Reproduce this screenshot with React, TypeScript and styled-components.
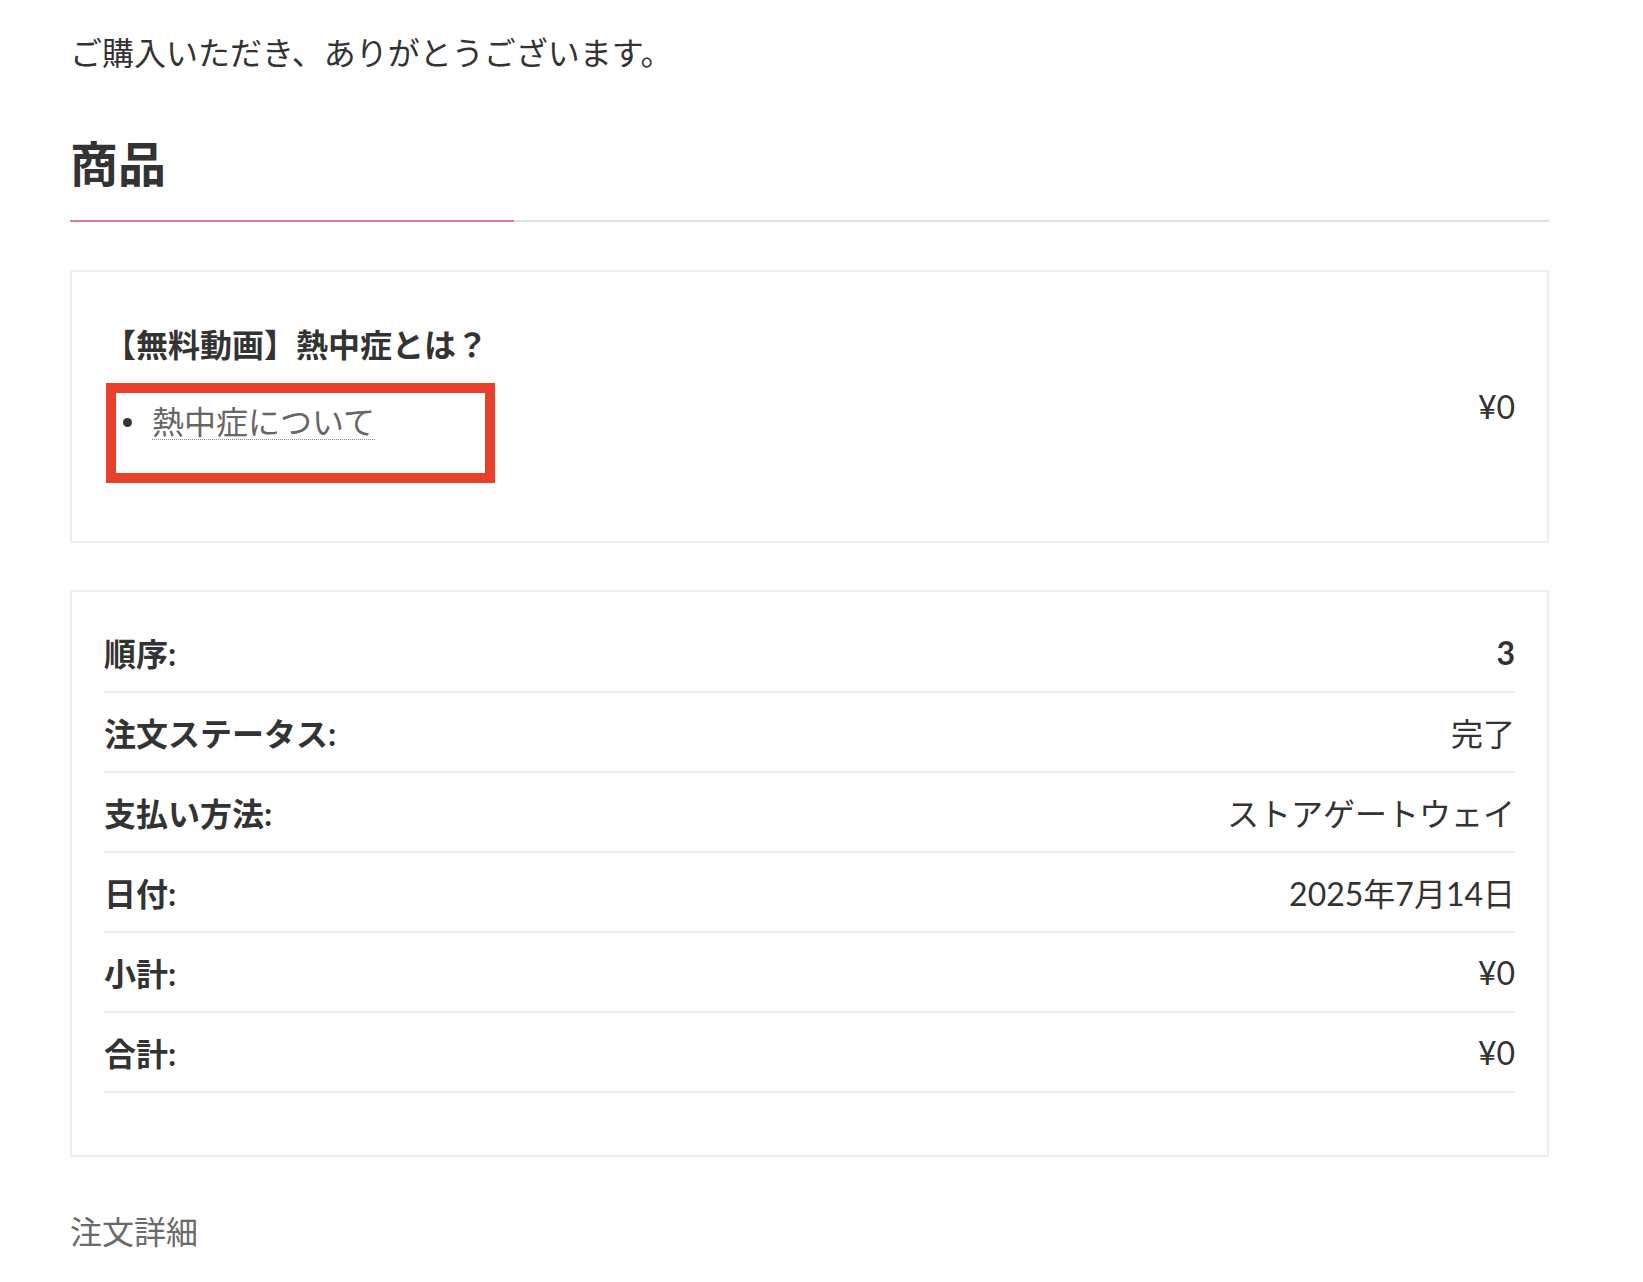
import * as React from 'react'
import styled, { createGlobalStyle } from 'styled-components'

const GlobalStyle = createGlobalStyle`
  html, body {
    margin: 0;
    padding: 0;
    background: #ffffff;
  }
  body {
    font-family: Lato, "Noto Sans CJK JP", sans-serif;
    color: #333333;
  }
`

const Page = styled.div`
  width: 1479px;
  padding: 30px 0 40px 70px;
`
const Intro = styled.p`
  margin: 0;
  font-size: 32px;
  line-height: 46px;
  color: #333;
`
const Heading = styled.h2`
  margin: 58px 0 0;
  font-size: 48px;
  line-height: 60px;
  font-weight: 700;
  color: #333;
`
const Underline = styled.div`
  display: flex;
  margin-top: 26px;
  height: 2px;
`
const UnderlineSegment = styled.div<{ $accent?: boolean }>`
  height: 2px;
  background: ${({ $accent }) => ($accent ? '#e0789b' : '#e2e2e2')};
  ${({ $accent }) => ($accent ? 'width: 30%;' : 'flex: 1;')}
`
const Card = styled.div`
  border: 2px solid #eeeeee;
`
const ProductCard = styled(Card)`
  margin-top: 48px;
  padding: 50px 32px;
  display: flex;
  align-items: center;
  justify-content: space-between;
`
const ProductInfo = styled.div`
  display: flex;
  flex-direction: column;
`
const ProductTitle = styled.div`
  font-size: 32px;
  line-height: 46px;
  font-weight: 700;
  color: #333;
`
const ItemList = styled.ul`
  position: relative;
  list-style: none;
  margin: 37px 0 51px;
  padding: 0;
`
const Item = styled.li`
  display: flex;
  align-items: center;
  gap: 20px;
  padding-left: 19px;
  font-size: 32px;
  line-height: 46px;
`
const Bullet = styled.span`
  width: 9px;
  height: 9px;
  border-radius: 50%;
  background: #333;
`
const ItemLink = styled.a`
  color: #666;
  text-decoration: none;
  border-bottom: 1.5px dotted #888;
  line-height: 34px;
`
const Highlight = styled.div`
  position: absolute;
  left: 2px;
  top: -22px;
  width: 369px;
  height: 80px;
  border: 10px solid #e8402a;
  pointer-events: none;
`
const Price = styled.div`
  font-size: 32px;
  line-height: 46px;
  color: #333;
`
const SummaryCard = styled(Card)`
  margin-top: 47px;
  padding: 21px 32px 62px;
`
const SummaryRow = styled.div`
  display: flex;
  align-items: center;
  justify-content: space-between;
  height: 78px;
  border-bottom: 2px solid #eeeeee;
  font-size: 32px;
`
const Label = styled.span`
  font-weight: 700;
  color: #333;
`
const Value = styled.span<{ $bold?: boolean }>`
  font-weight: ${({ $bold }) => ($bold ? 700 : 400)};
  color: #333;
`
const DetailsTitle = styled.div`
  margin-top: 52px;
  font-size: 32px;
  line-height: 46px;
  color: #6a6a6a;
`

const rows = [
  { label: '順序:', value: '3', bold: true },
  { label: '注文ステータス:', value: '完了' },
  { label: '支払い方法:', value: 'ストアゲートウェイ' },
  { label: '日付:', value: '2025年7月14日' },
  { label: '小計:', value: '¥0' },
  { label: '合計:', value: '¥0' },
]

export default function App() {
  return (
    <Page>
      <GlobalStyle />
      <Intro>ご購入いただき、ありがとうございます。</Intro>
      <Heading>商品</Heading>
      <Underline>
        <UnderlineSegment $accent />
        <UnderlineSegment />
      </Underline>
      <ProductCard>
        <ProductInfo>
          <ProductTitle>【無料動画】熱中症とは？</ProductTitle>
          <ItemList>
            <Item>
              <Bullet />
              <ItemLink href="#">熱中症について</ItemLink>
            </Item>
            <Highlight />
          </ItemList>
        </ProductInfo>
        <Price>¥0</Price>
      </ProductCard>
      <SummaryCard>
        {rows.map(r => (
          <SummaryRow key={r.label}>
            <Label>{r.label}</Label>
            <Value $bold={r.bold}>{r.value}</Value>
          </SummaryRow>
        ))}
      </SummaryCard>
      <DetailsTitle>注文詳細</DetailsTitle>
    </Page>
  )
}
